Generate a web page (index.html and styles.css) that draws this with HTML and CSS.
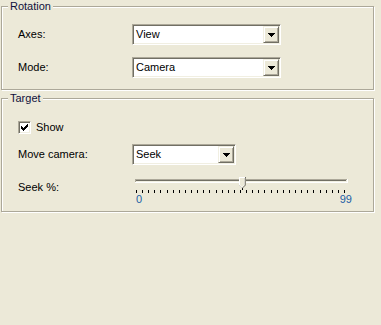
FILE: index.html
```html
<!DOCTYPE html>
<html lang="en">
<head>
  <meta charset="UTF-8">
  <title>Camera Options</title>
  <link rel="stylesheet" href="styles.css">
</head>
<body>
  <fieldset class="group">
    <legend>Rotation</legend>
    <div class="group-body rotation">
      <span class="label">Axes:</span>
      <div class="combo wide">
        <span class="combo-text">View</span>
        <span class="combo-btn"><svg width="7" height="4"><path d="M0 0h7v1h-1v1h-1v1h-1v1h-1v-1h-1v-1h-1v-1h-1z"/></svg></span>
      </div>
      <span class="label">Mode:</span>
      <div class="combo wide">
        <span class="combo-text">Camera</span>
        <span class="combo-btn"><svg width="7" height="4"><path d="M0 0h7v1h-1v1h-1v1h-1v1h-1v-1h-1v-1h-1v-1h-1z"/></svg></span>
      </div>
    </div>
  </fieldset>

  <fieldset class="group target">
    <legend>Target</legend>
    <div class="group-body">
      <label class="check-row">
        <span class="check"><svg width="7" height="7"><path d="M0 2h1v3h-1zM1 3h1v3h-1zM2 4h1v3h-1zM3 3h1v3h-1zM4 2h1v3h-1zM5 1h1v3h-1zM6 0h1v3h-1z"/></svg></span>
        Show
      </label>
      <span class="label">Move camera:</span>
      <div class="combo narrow">
        <span class="combo-text">Seek</span>
        <span class="combo-btn"><svg width="7" height="4"><path d="M0 0h7v1h-1v1h-1v1h-1v1h-1v-1h-1v-1h-1v-1h-1z"/></svg></span>
      </div>
      <span class="label seek-label">Seek %:</span>
      <div class="trackbar">
        <svg width="222" height="18">
          <!-- groove -->
          <rect x="3" y="4" width="213" height="4" fill="#fff"/>
          <rect x="3" y="4" width="212" height="3" fill="#ACA899"/>
          <rect x="4" y="5" width="211" height="2" fill="#F1EFE2"/>
          <rect x="4" y="5" width="210" height="1" fill="#716F64"/>
          <!-- ticks, every 3 from 0 to 99 -->
          <path stroke="#000" stroke-width="1" d="M4.5 15v3M10.5 15v3M16.5 15v3M22.5 15v3M28.5 15v3M35.5 15v3M41.5 15v3M47.5 15v3M53.5 15v3M59.5 15v3M65.5 15v3M71.5 15v3M77.5 15v3M84.5 15v3M90.5 15v3M96.5 15v3M102.5 15v3M108.5 15v3M114.5 15v3M120.5 15v3M126.5 15v3M132.5 15v3M139.5 15v3M145.5 15v3M151.5 15v3M157.5 15v3M163.5 15v3M169.5 15v3M175.5 15v3M181.5 15v3M188.5 15v3M194.5 15v3M200.5 15v3M206.5 15v3M212.5 15v3"/>
          <path stroke="#000" stroke-width="1" d="M110.5 13v2"/>
          <!-- thumb -->
          <path d="M107 2h7v8l-3.5 3.5L107 10z" fill="#716F64"/>
          <path d="M107 2h6v8l-3 3-3-3z" fill="#fff"/>
          <path d="M108 3h4v7l-2 2-2-2z" fill="#ECE9D8"/>
          <path d="M113 3v7l-2.5 2.5" fill="none" stroke="#ACA899"/>
        </svg>
        <div class="track-labels">
          <span>0</span>
          <span>99</span>
        </div>
      </div>
    </div>
  </fieldset>
</body>
</html>
```

FILE: styles.css
```css
body {
  margin: 0;
  width: 381px;
  height: 325px;
  overflow: hidden;
  background-color: #ECE9D8;
  font-family: "Liberation Sans", Arial, sans-serif;
  font-size: 11px;
  line-height: 13px;
  color: #000;
}
.group {
  margin: 0 0 0 1px;
  padding: 0;
  width: 373px;
  box-sizing: border-box;
  border: 1px solid #ACA899;
  box-shadow: 1px 1px 0 #fff, inset 1px 1px 0 #fff;
}
.group legend {
  margin-left: 6px;
  padding: 0 2px;
  line-height: 13px;
  background-color: #ECE9D8;
  color: #10103c;
}
.target {
  margin-top: 2px;
}
.group-body {
  display: grid;
  grid-template-columns: 114px auto;
  align-items: center;
  justify-items: start;
  row-gap: 10px;
  padding: 16px 0 5px 16px;
}
.group-body.rotation {
  row-gap: 12px;
  padding: 11px 0 11px 16px;
}
.check-row {
  grid-column: 1 / 3;
  display: flex;
  align-items: center;
  gap: 5px;
}
.check {
  width: 13px;
  height: 13px;
  box-sizing: border-box;
  border: 1px solid;
  border-color: #ACA899 #fff #fff #ACA899;
  background: #fff;
  box-shadow: inset 1px 1px 0 #716F64, inset -1px -1px 0 #F1EFE2;
  display: flex;
  align-items: center;
  justify-content: center;
}
.check svg {
  display: block;
}
.combo {
  display: flex;
  height: 21px;
  box-sizing: border-box;
  border: 1px solid;
  border-color: #ACA899 #fff #fff #ACA899;
  padding: 1px;
  background: #fff;
  box-shadow: inset 1px 1px 0 #716F64, inset -1px -1px 0 #F1EFE2;
}
.combo.wide {
  width: 149px;
}
.combo.narrow {
  width: 104px;
}
.combo-text {
  flex: 1;
  display: flex;
  align-items: center;
  padding-left: 2px;
}
.combo-btn {
  width: 16px;
  box-sizing: border-box;
  background: #ECE9D8;
  border: 1px solid;
  border-color: #F1EFE2 #716F64 #716F64 #F1EFE2;
  box-shadow: inset 1px 1px 0 #fff, inset -1px -1px 0 #ACA899;
  display: flex;
  align-items: center;
  justify-content: center;
  padding-top: 1px;
}
.combo-btn svg {
  display: block;
}
.seek-label {
  align-self: start;
  margin-top: 6px;
}
.trackbar {
  width: 222px;
}
.trackbar svg {
  display: block;
}
.track-labels {
  display: flex;
  justify-content: space-between;
  padding: 0 2px 0 4px;
  color: #1c5fa6;
}
```
